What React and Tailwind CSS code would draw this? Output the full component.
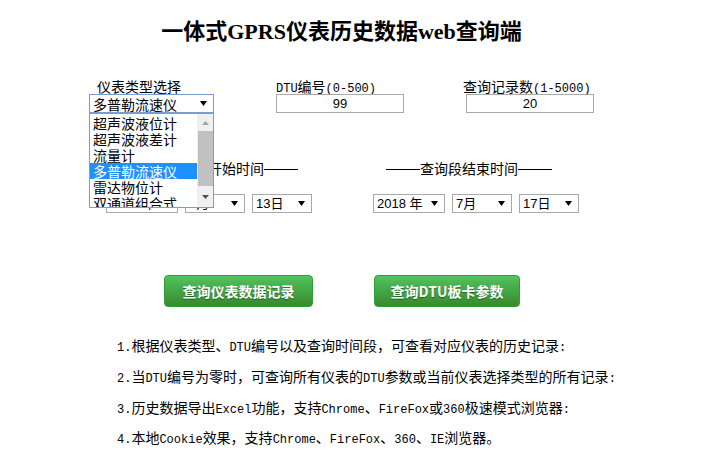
import React from "react";

function Mixed({ text, latinCls }) {
  const parts = text.split(/([\x00-\x7f]+)/).filter((p) => p.length);
  return (
    <>
      {parts.map((p, i) =>
        /^[\x00-\x7f]+$/.test(p) ? (
          <span key={i} className={latinCls}>
            {p}
          </span>
        ) : (
          <span key={i}>{p}</span>
        )
      )}
    </>
  );
}

function Arrow({ color = "#000" }) {
  return (
    <svg width="7" height="5" viewBox="0 0 7 5" className="shrink-0">
      <path d="M0 0H7L3.5 5Z" fill={color} />
    </svg>
  );
}

function Dash() {
  return <span className="inline-block w-[34px] h-[1px] bg-black align-middle mb-[2px]" />;
}

function FakeSelect({ w, label }) {
  return (
    <div
      className={`${w} h-[19px] border border-[#a9a9a9] bg-white flex items-center justify-between pl-[3px] pr-[6px] text-[13px] leading-none text-black font-['Liberation_Sans','Noto_Sans_CJK_SC',sans-serif]`}
    >
      <span>{label}</span>
      <Arrow />
    </div>
  );
}

const mono = "font-['Liberation_Mono',monospace] text-[12px]";

function Line({ text, extra = "" }) {
  return (
    <div className={`h-[31px] flex items-center whitespace-nowrap ${extra}`}>
      <div className="leading-[16px]">
        <Mixed text={text} latinCls={mono} />
      </div>
    </div>
  );
}

export default function App() {
  const items = ["超声波液位计", "超声波液差计", "流量计", "多普勒流速仪", "雷达物位计", "双通道组合式"];
  return (
    <div className="relative w-[702px] h-[464px] bg-white text-black font-['Noto_Sans_CJK_SC',sans-serif] overflow-hidden">
      {/* Title */}
      <div className="pt-[20px] pr-[19px] h-[44px] text-center text-[22px] leading-[24px] font-bold font-['Liberation_Serif','Noto_Sans_CJK_SC',serif]">
        一体式GPRS仪表历史数据web查询端
      </div>

      {/* Label row */}
      <div className="mt-[34px] flex h-[16px] text-[14px] leading-[16px]">
        <div className="ml-[97px] w-[179px]">仪表类型选择</div>
        <div className="w-[187px]">
          <Mixed text="DTU编号(0-500)" latinCls={mono} />
        </div>
        <div>
          <Mixed text="查询记录数(1-5000)" latinCls={mono} />
        </div>
      </div>

      {/* Inputs row */}
      <div className="flex h-[19px]">
        <div className="ml-[89px] w-[125px] h-[19px] border border-[#7a9cd3] flex items-center justify-between pl-[3px] pr-[6px] text-[14px] leading-none">
          <span>多普勒流速仪</span>
          <Arrow />
        </div>
        <div className="ml-[62px] w-[128px] h-[19px] border border-[#a9a9a9] flex items-center justify-center text-[13px] leading-none font-['Liberation_Sans',sans-serif]">
          99
        </div>
        <div className="ml-[62px] w-[128px] h-[19px] border border-[#a9a9a9] flex items-center justify-center text-[13px] leading-none font-['Liberation_Sans',sans-serif]">
          20
        </div>
      </div>

      {/* Time headers */}
      <div className="mt-[47px] flex h-[16px] text-[14px] leading-[16px]">
        <div className="ml-[132px] w-[254px] whitespace-nowrap">
          <Dash />查询段开始时间<Dash />
        </div>
        <div className="whitespace-nowrap">
          <Dash />查询段结束时间<Dash />
        </div>
      </div>

      {/* Date selects */}
      <div className="mt-[18px] flex">
        <div className="ml-[106px] flex gap-[7px]">
          <FakeSelect w="w-[72px]" label="2018 年" />
          <FakeSelect w="w-[60px]" label="7月" />
          <FakeSelect w="w-[60px]" label="13日" />
        </div>
        <div className="ml-[61px] flex gap-[7px]">
          <FakeSelect w="w-[72px]" label="2018 年" />
          <FakeSelect w="w-[60px]" label="7月" />
          <FakeSelect w="w-[60px]" label="17日" />
        </div>
      </div>

      {/* Buttons */}
      <div className="mt-[62px] flex">
        <button className="ml-[164px] w-[149px] h-[32px] rounded-[4px] border border-[#2f9e38] bg-gradient-to-b from-[#52c35f] to-[#368a2b] text-white text-[14px] font-bold [text-shadow:0_1px_1px_rgba(0,0,0,0.4)]">
          查询仪表数据记录
        </button>
        <button className="ml-[61px] w-[146px] h-[32px] rounded-[4px] border border-[#2f9e38] bg-gradient-to-b from-[#52c35f] to-[#368a2b] text-white text-[14px] font-bold [text-shadow:0_1px_1px_rgba(0,0,0,0.4)]">
          查询DTU板卡参数
        </button>
      </div>

      {/* Instructions */}
      <div className="mt-[24px] ml-[117px] text-[14px]">
        <Line text="1.根据仪表类型、DTU编号以及查询时间段，可查看对应仪表的历史记录:" />
        <Line text="2.当DTU编号为零时，可查询所有仪表的DTU参数或当前仪表选择类型的所有记录:" />
        <Line text="3.历史数据导出Excel功能，支持Chrome、FireFox或360极速模式浏览器:" />
        <Line text="4.本地Cookie效果，支持Chrome、FireFox、360、IE浏览器。" extra="-mt-[1px]" />
      </div>

      {/* Open dropdown list overlay */}
      <div className="absolute left-[89px] top-[113px] w-[125px] h-[95px] border border-[#7a9cd3] bg-white overflow-hidden flex">
        <div className="w-[107px] pt-[1px]">
          {items.map((t) => (
            <div
              key={t}
              className={`h-[16px] pl-[3px] text-[14px] leading-[16px] whitespace-nowrap ${
                t === "多普勒流速仪" ? "bg-[#1e90ff] text-white" : "text-black"
              }`}
            >
              {t}
            </div>
          ))}
        </div>
        <div className="w-[16px] h-full bg-[#f0f0f0] flex flex-col items-center">
          <div className="h-[17px] flex items-center justify-center">
            <svg width="7" height="4" viewBox="0 0 7 4">
              <path d="M0 4L3.5 0L7 4Z" fill="#a3a3a3" />
            </svg>
          </div>
          <div className="w-[15px] h-[55px] bg-[#c1c1c1]" />
          <div className="flex-1 flex items-center justify-center">
            <svg width="7" height="4" viewBox="0 0 7 4">
              <path d="M0 0H7L3.5 4Z" fill="#505050" />
            </svg>
          </div>
        </div>
      </div>
    </div>
  );
}
